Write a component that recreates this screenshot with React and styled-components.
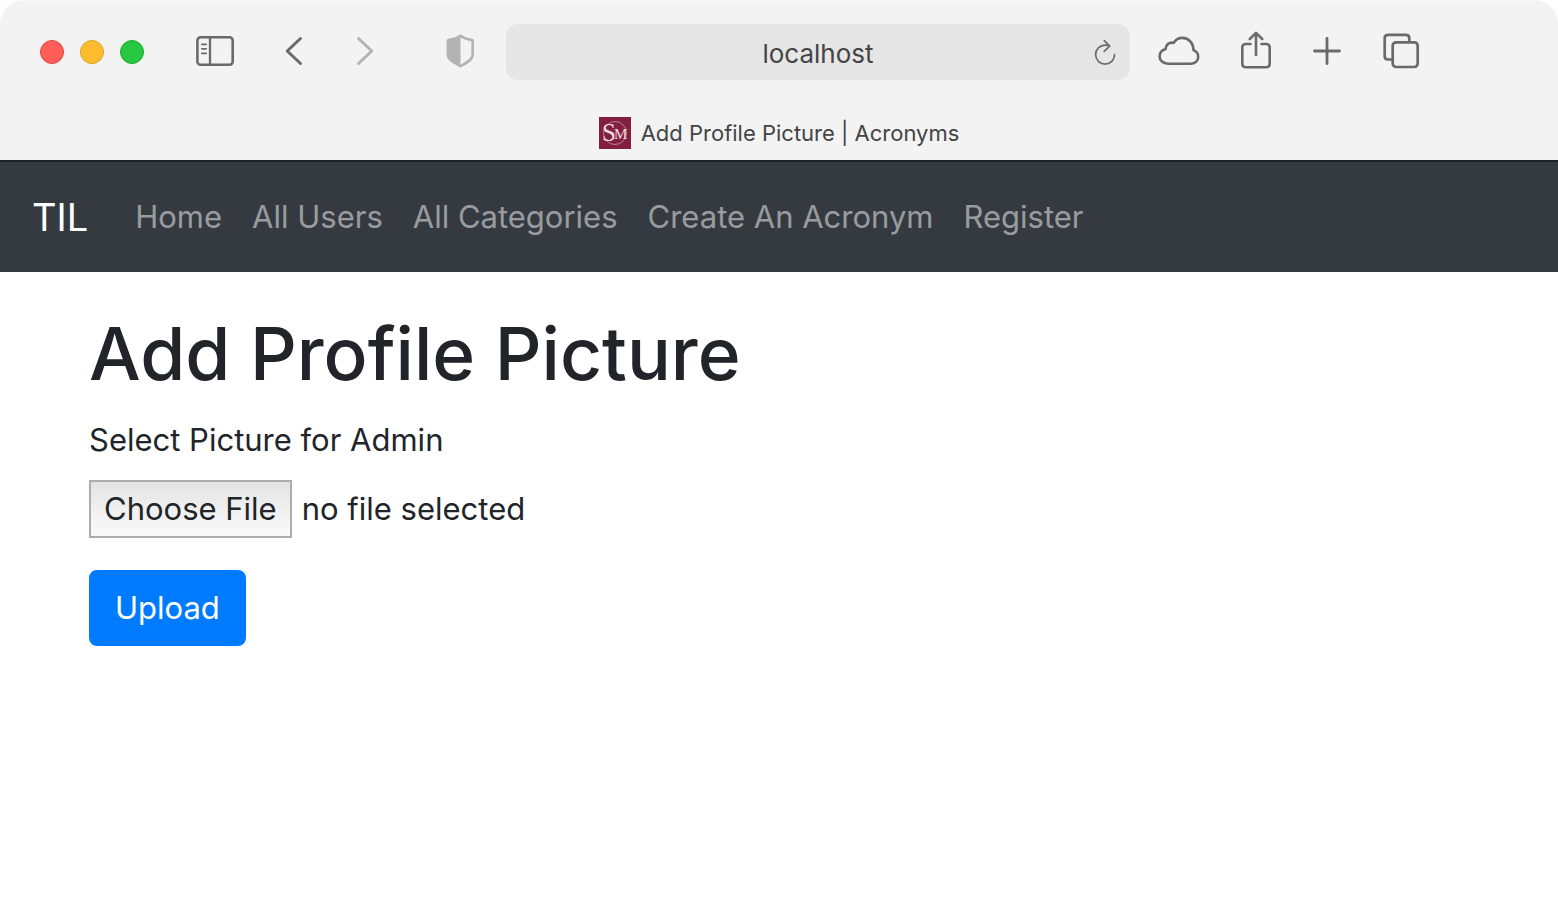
import React, { useState } from "react";
import styled, { createGlobalStyle } from "styled-components";

const GlobalStyle = createGlobalStyle`
  *, *::before, *::after { box-sizing: border-box; }
  body {
    margin: 0;
    background: #fff;
    color: #212529;
    font-family: Inter, "Liberation Sans", sans-serif;
    font-size: 31px;
    line-height: 48px;
  }
`;

const Window = styled.div`
  min-height: 100vh;
  border-radius: 24px 24px 0 0;
  overflow: hidden;
`;

const Chrome = styled.header`
  background: #f3f3f3;
  border-top: 1px solid #f8f8f8;
`;

const Toolbar = styled.div`
  display: flex;
  align-items: center;
  height: 102px;
  padding: 0 138px 0 40px;
`;

const Lights = styled.div`
  display: flex;
  gap: 16px;
  margin-right: 52px;
`;

const Light = styled.button`
  width: 24px;
  height: 24px;
  padding: 0;
  border: 1px solid ${(p) => p.$edge};
  border-radius: 50%;
  background: ${(p) => p.$fill};
`;

const IconButton = styled.button`
  display: flex;
  flex: none;
  padding: 0;
  border: 0;
  background: none;
  color: ${(p) => (p.$dim ? "#b3b3b3" : "#6a6a6a")};
`;

const IconGroup = styled.div`
  display: flex;
  align-items: center;
  padding-bottom: 2px;
`;

const Navigation = styled(IconGroup)`
  gap: 50px;
  margin-right: 72px;
`;

const Privacy = styled(IconGroup)`
  margin-right: 31px;
`;

const Actions = styled(IconGroup)`
  gap: 40px;
  margin-left: 28px;
`;

const Address = styled.div`
  display: flex;
  align-items: center;
  flex: 1;
  min-width: 0;
  height: 56px;
  padding: 0 13px 0 37px;
  border-radius: 12px;
  background: #e6e6e6;
`;

const AddressInput = styled.input`
  flex: 1;
  min-width: 0;
  padding: 3px 0 0;
  border: 0;
  background: none;
  color: #444;
  font: inherit;
  font-size: 26px;
  line-height: 32px;
  text-align: center;
`;

const TabBar = styled.div`
  display: flex;
  align-items: center;
  justify-content: center;
  gap: 10px;
  height: 57px;
  padding-top: 2px;
  color: #444;
  font-size: 22px;
  line-height: 32px;
`;

const Navbar = styled.nav`
  display: flex;
  align-items: center;
  height: 112px;
  padding: 0 32px;
  border-top: 2px solid #1d2125;
  background: #343a40;
`;

const Brand = styled.a`
  margin-right: 32px;
  color: #fff;
  font-size: 38px;
  line-height: 60px;
  text-decoration: none;
`;

const NavList = styled.ul`
  display: flex;
  margin: 0;
  padding: 0;
  list-style: none;
`;

const NavLink = styled.a`
  display: block;
  padding: 16px 15px;
  color: rgba(255, 255, 255, 0.5);
  text-decoration: none;
  white-space: nowrap;
`;

const Container = styled.main`
  max-width: 1440px;
  margin: 32px auto 0;
  padding: 0 30px;
`;

const Title = styled.h1`
  margin: 0 0 12px;
  font-size: 73px;
  font-weight: 500;
  line-height: 100px;
`;

const FieldLabel = styled.label`
  display: block;
  margin-bottom: 16px;
`;

const FileRow = styled.div`
  display: flex;
  align-items: center;
  gap: 10px;
  margin-bottom: 32px;
`;

const FileInput = styled.input`
  position: absolute;
  width: 1px;
  height: 1px;
  opacity: 0;
`;

const FileButton = styled.label`
  padding: 3px 13px;
  border: 2px solid #adadad;
  background: linear-gradient(#e3e3e3, #f0f0f0 50%, #f9f9f9);
`;

const UploadButton = styled.button`
  padding: 12px 24px;
  border: 2px solid #007bff;
  border-radius: 8px;
  background: #007bff;
  color: #fff;
  font: inherit;
`;

const Stroke = ({ w, h, sw = 3, children }) => (
  <svg width={w} height={h} viewBox={`0 0 ${w} ${h}`} fill="none" stroke="currentColor" strokeWidth={sw} strokeLinecap="round" strokeLinejoin="round" aria-hidden="true">
    {children}
  </svg>
);

const SidebarIcon = () => (
  <Stroke w={38} h={32} sw={2.6}>
    <rect x="1.4" y="2.3" width="35.3" height="27.5" rx="3.2" />
    <path d="M14 2.3v27.5" strokeWidth="2.3" />
    <path d="M5.8 9.3h4.4M5.8 13.8h4.4M5.8 18.3h4.4" strokeWidth="1.7" />
  </Stroke>
);

const BackIcon = () => (
  <Stroke w={20} h={32}><path d="M16.5 3.5 3.2 16l13.3 12.5" /></Stroke>
);

const ForwardIcon = () => (
  <Stroke w={20} h={32}><path d="M4.500 3.500 17.800 16 4.500 28.500" /></Stroke>
);

const ShieldIcon = () => (
  <Stroke w={29} h={34} sw={2.6}>
    <path d="M14.500 1.800C11.100 4.400 6.800 5.400 3.100 5.900c-.9.1-1.300.6-1.300 1.500v13.200c0 5.600 7.800 8.800 12.700 11.600 4.900-2.800 12.200-6 12.200-11.600V7.400c0-.9-.4-1.400-1.300-1.500C21.800 5.400 17.900 4.400 14.500 1.800Z" />
    <path d="M14.500 1.800C11.100 4.400 6.800 5.400 3.100 5.900c-.9.1-1.300.6-1.300 1.500v13.200c0 5.600 7.800 8.800 12.700 11.600Z" fill="currentColor" stroke="none" />
  </Stroke>
);

const ReloadIcon = () => (
  <Stroke w={24} h={28} sw={1.7}>
    <path d="M21.600 16.600A9.500 9.500 0 1 1 12.100 7.100c1.500 0 2.900.3 4.200.9" />
    <path d="M11.300 2.600l5.400 5.500-5.500 5.300" />
  </Stroke>
);

const CloudIcon = () => (
  <Stroke w={42} h={30} sw={2.6}>
    <path d="M10 27.700h22.500c4.500 0 7.700-2.900 7.700-7 0-3.100-1.800-5.500-4.700-6.600C35.400 7 30.700 1.900 24.300 1.900c-3.900 0-6.900 2-8.700 5C11.400 5.700 7.700 8.700 7.600 12.900 3.900 14 1.600 16.700 1.600 20.200c0 4.300 3.500 7.500 8.400 7.500Z" />
  </Stroke>
);

const ShareIcon = () => (
  <Stroke w={32} h={40} sw={2.6}>
    <path d="M10.500 13H5.800C3.600 13 2.300 14.300 2.300 16.400v16.300c0 2.200 1.300 3.500 3.500 3.500h20.400c2.200 0 3.500-1.300 3.500-3.500V16.400c0-2.100-1.300-3.400-3.500-3.400h-4.700" />
    <path d="M16 24V2.200M9.800 8 16 1.800 22.200 8" />
  </Stroke>
);

const PlusIcon = () => (
  <Stroke w={30} h={30} sw={2.8}><path d="M15 2.500v25M2.500 15h25" /></Stroke>
);

const TabsIcon = () => (
  <Stroke w={38} h={36} sw={2.7}>
    <path d="M9.500 26.500H6c-2.100 0-3.300-1.200-3.300-3.300V5.200c0-2.100 1.200-3.300 3.300-3.300h18c2.100 0 3.300 1.200 3.300 3.300v3.300" />
    <rect x="10.700" y="9.300" width="25" height="24.700" rx="3.500" />
  </Stroke>
);

const Favicon = () => (
  <svg width="32" height="32" viewBox="0 0 32 32" aria-hidden="true">
    <rect width="32" height="32" fill="#831f3e" />
    <circle cx="16" cy="16" r="11.500" fill="none" stroke="#c08a9b" strokeWidth="0.900" />
    <g fill="#f1dde3" fontFamily="Liberation Serif, serif">
      <text x="3" y="24" fontSize="25">S</text>
      <text x="15" y="22" fontSize="15">M</text>
    </g>
  </svg>
);

const links = ["Home", "All Users", "All Categories", "Create An Acronym", "Register"];

export default function App() {
  const [fileName, setFileName] = useState("");
  const [url, setUrl] = useState("localhost");

  return (
    <>
      <GlobalStyle />
      <Window>
        <Chrome>
          <Toolbar>
            <Lights>
              <Light $fill="#ff5f57" $edge="#e2463f" aria-label="Close" />
              <Light $fill="#febc2e" $edge="#dfa023" aria-label="Minimize" />
              <Light $fill="#28c840" $edge="#1aab29" aria-label="Zoom" />
            </Lights>
            <Navigation>
              <IconButton aria-label="Show sidebar"><SidebarIcon /></IconButton>
              <IconButton aria-label="Back"><BackIcon /></IconButton>
              <IconButton $dim aria-label="Forward"><ForwardIcon /></IconButton>
            </Navigation>
            <Privacy>
              <IconButton $dim aria-label="Privacy report"><ShieldIcon /></IconButton>
            </Privacy>
            <Address>
              <AddressInput aria-label="Address" value={url} onChange={(e) => setUrl(e.target.value)} />
              <IconButton aria-label="Reload"><ReloadIcon /></IconButton>
            </Address>
            <Actions>
              <IconButton aria-label="iCloud tabs"><CloudIcon /></IconButton>
              <IconButton aria-label="Share"><ShareIcon /></IconButton>
              <IconButton aria-label="New tab"><PlusIcon /></IconButton>
              <IconButton aria-label="Tab overview"><TabsIcon /></IconButton>
            </Actions>
          </Toolbar>
          <TabBar>
            <Favicon />
            <span>Add Profile Picture | Acronyms</span>
          </TabBar>
        </Chrome>
        <Navbar>
          <Brand href="#">TIL</Brand>
          <NavList>
            {links.map((name) => (
              <li key={name}><NavLink href="#">{name}</NavLink></li>
            ))}
          </NavList>
        </Navbar>
        <Container>
          <Title>Add Profile Picture</Title>
          <form onSubmit={(e) => e.preventDefault()}>
            <FieldLabel htmlFor="picture">Select Picture for Admin</FieldLabel>
            <FileRow>
              <FileInput id="picture" type="file" onChange={(e) => setFileName(e.target.files[0]?.name ?? "")} />
              <FileButton htmlFor="picture">Choose File</FileButton>
              <span>{fileName || "no file selected"}</span>
            </FileRow>
            <UploadButton type="submit">Upload</UploadButton>
          </form>
        </Container>
      </Window>
    </>
  );
}
